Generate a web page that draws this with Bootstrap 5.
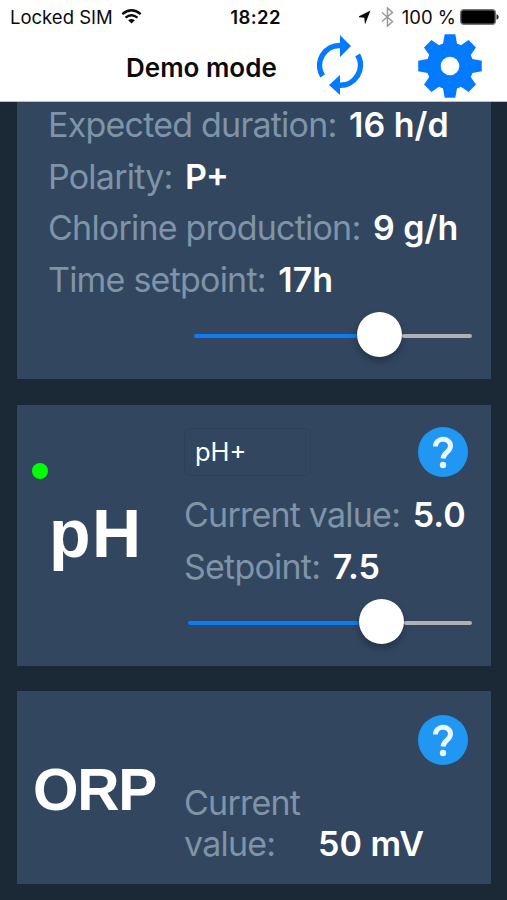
<!DOCTYPE html>
<html lang="en">
<head>
<meta charset="utf-8">
<meta name="viewport" content="width=device-width, initial-scale=1">
<title>Demo mode</title>
<link href="https://cdn.jsdelivr.net/npm/bootstrap@5.3.0/dist/css/bootstrap.min.css" rel="stylesheet">
<style>
body{font-family:Inter,"Liberation Sans",sans-serif;background:#1b2835;color:#fff;width:507px;height:900px;overflow:hidden}
svg{display:block;flex:none}
.topbar{height:102px;background:#fff;color:#0b0b0b;border-bottom:1px solid #b9c1c9}
.status{height:34px;font-size:18.5px;line-height:34px}
.status .third{width:169px}
.carrier{margin-left:10px}
.clock{font-weight:600;letter-spacing:.4px}
.title{font-size:26px;font-weight:600;line-height:68px;margin-left:126px;width:191px}
.gear{margin-right:25px}
.panel{background:#324660;margin:0 16px 0 17px}
.p-first{height:277px;padding:0 19px 0 31px}
.p-ph{height:261px;margin-top:26px}
.p-orp{height:193px;margin-top:25px}
.line{font-size:34px;line-height:51.5px;height:51.5px}
.p-first .line:first-child{margin-top:-3px}
.lbl{color:#7f94a7;font-weight:400;letter-spacing:-.78px;margin-right:3px}
.val{font-weight:600}
.side{width:167px;font:700 68px/1 "Liberation Sans",Arial,sans-serif}
.name-ph{padding:20px 0 0 32px;letter-spacing:1.5px}
.name-orp{font-size:58.5px;padding:70px 0 0 16px;letter-spacing:-1.3px}
.ph-body{padding:22px 19px 0 0}
.orp-body{padding:24px 19px 0 0}
.ph-value{margin-top:12px}
.slider{height:48px}
.s-time{margin:7px 0 0 146px}
.s-ph{margin:7px 0 0 4px}
.track{height:4px;border-radius:2px}
.t-on{background:#0a7cf5}
.t-off{background:#adb2b6}
.thumb{width:45px;height:45px;border-radius:50%;background:#fff;box-shadow:0 4px 7px rgba(0,0,0,.28);margin-top:-3px}
.pick{width:127px;height:48px;margin-top:1px;border:1px solid #2d4059;border-radius:7px;font-size:25.5px;line-height:45px;padding-left:10px}
.help{width:50px;height:50px;border-radius:50%;background:#2196f3}
.dot{width:16px;height:16px;border-radius:50%;background:#0f0;margin:58px 0 0 15px}
.orp-value{margin-top:17px;font-size:34px;line-height:41px}
.orp-value .lbl{width:131px}
</style>
<script src="https://cdn.jsdelivr.net/npm/bootstrap@5.3.0/dist/js/bootstrap.bundle.min.js"></script>
</head>
<body>
<header class="topbar">
  <div class="status d-flex">
    <div class="third d-flex align-items-center"><span class="carrier">Locked SIM</span>
      <svg class="ms-2" width="21" height="16" viewBox="0 0 21 16" fill="none" stroke="#0b0b0b" stroke-width="2.3"><path d="M1.300 5.200Q10.500-2.600 19.700 5.200M4.500 8.700Q10.500 3.700 16.500 8.700"/><path d="M10.500 14.500 7.200 11.300Q10.500 8.600 13.800 11.300Z" fill="#0b0b0b" stroke="none"/></svg>
    </div>
    <div class="third text-center clock ps-1">18:22</div>
    <div class="third d-flex align-items-center justify-content-end pe-2">
      <svg class="me-1" width="14" height="15" viewBox="0 0 14 15"><path d="M13.500.500 8 14.500 7.300 7.700.500 7Z" fill="#0b0b0b" transform="translate(-2)"/></svg>
      <svg class="ms-1" width="13" height="20" viewBox="2 0 13 20" fill="none" stroke="#999" stroke-width="1.500"><path d="M3 5.500 13.500 14.500 8.500 19V1L13.500 5.500 3 14.500"/></svg>
      <span class="ms-2">100 %</span>
      <svg class="ms-1" width="39" height="16" viewBox="0 0 39 16"><rect x=".7" y=".7" width="34.600" height="14.600" rx="3" fill="#000" stroke="#777" stroke-width="1.400"/><path d="M36.500 5.200Q38.700 6 38.700 8T36.500 10.800Z" fill="#222"/></svg>
    </div>
  </div>
  <div class="d-flex">
    <div class="title">Demo mode</div>
    <svg width="48" height="62" viewBox="317 34 48 62"><g fill="none" stroke="#047bff" stroke-width="5.500"><path d="M322.600 76A20 20 0 0 1 341 45.500"/><path d="M357.600 54.800A20.200 20.200 0 0 1 339 85.300"/></g><path d="M340 35 351 46 340 57ZM340 75 329 85 340 95Z" fill="#047bff"/></svg>
    <svg class="ms-auto gear" width="64" height="64" viewBox="-32 -32 64 64"><g fill="#047bff"><circle r="23.500"/><g id="teeth"><path d="M-7.500-20-5.300-31.800H5.300L7.500-20ZM-7.500 20-5.300 31.800H5.300L7.500 20ZM-20-7.500-31.800-5.300V5.300L-20 7.500ZM20-7.500 31.800-5.300V5.300L20 7.500Z"/></g><use href="#teeth" transform="rotate(45)scale(.99)"/></g><circle r="9.300" fill="#fff"/></svg>
  </div>
</header>
<main>
  <section class="panel p-first overflow-hidden">
    <div class="line"><span class="lbl">Expected duration:</span> <span class="val">16 h/d</span></div>
    <div class="line"><span class="lbl">Polarity:</span> <span class="val">P+</span></div>
    <div class="line"><span class="lbl">Chlorine production:</span> <span class="val">9 g/h</span></div>
    <div class="line"><span class="lbl">Time setpoint:</span> <span class="val">17h</span></div>
    <div class="slider s-time d-flex align-items-center"><div class="track t-on" style="width:163px"></div><div class="thumb"></div><div class="track t-off flex-fill"></div></div>
  </section>
  <section class="panel p-ph d-flex">
    <div class="side"><div class="dot"></div><div class="name-ph">pH</div></div>
    <div class="flex-fill ph-body">
      <div class="d-flex justify-content-between"><div class="pick">pH+</div>
        <svg class="help me-1" viewBox="0 0 50 50"><path d="M17.500 19.500C17.500 10 32.500 10 32.500 19C32.500 25 25.500 25 25 31.500" fill="none" stroke="#eaf6ff" stroke-width="5"/><circle cx="25" cy="38" r="3.200" fill="#eaf6ff"/></svg></div>
      <div class="line ph-value"><span class="lbl">Current value:</span> <span class="val">5.0</span></div>
      <div class="line"><span class="lbl">Setpoint:</span> <span class="val">7.5</span></div>
      <div class="slider s-ph d-flex align-items-center"><div class="track t-on" style="width:171px"></div><div class="thumb"></div><div class="track t-off flex-fill"></div></div>
    </div>
  </section>
  <section class="panel p-orp d-flex">
    <div class="side name-orp">ORP</div>
    <div class="flex-fill orp-body">
      <div class="d-flex justify-content-end">
        <svg class="help me-1" viewBox="0 0 50 50"><path d="M17.500 19.500C17.500 10 32.500 10 32.500 19C32.500 25 25.500 25 25 31.500" fill="none" stroke="#eaf6ff" stroke-width="5"/><circle cx="25" cy="38" r="3.200" fill="#eaf6ff"/></svg></div>
      <div class="d-flex align-items-end orp-value"><span class="lbl">Current value:</span><span class="val">50 mV</span></div>
    </div>
  </section>
</main>
</body>
</html>
